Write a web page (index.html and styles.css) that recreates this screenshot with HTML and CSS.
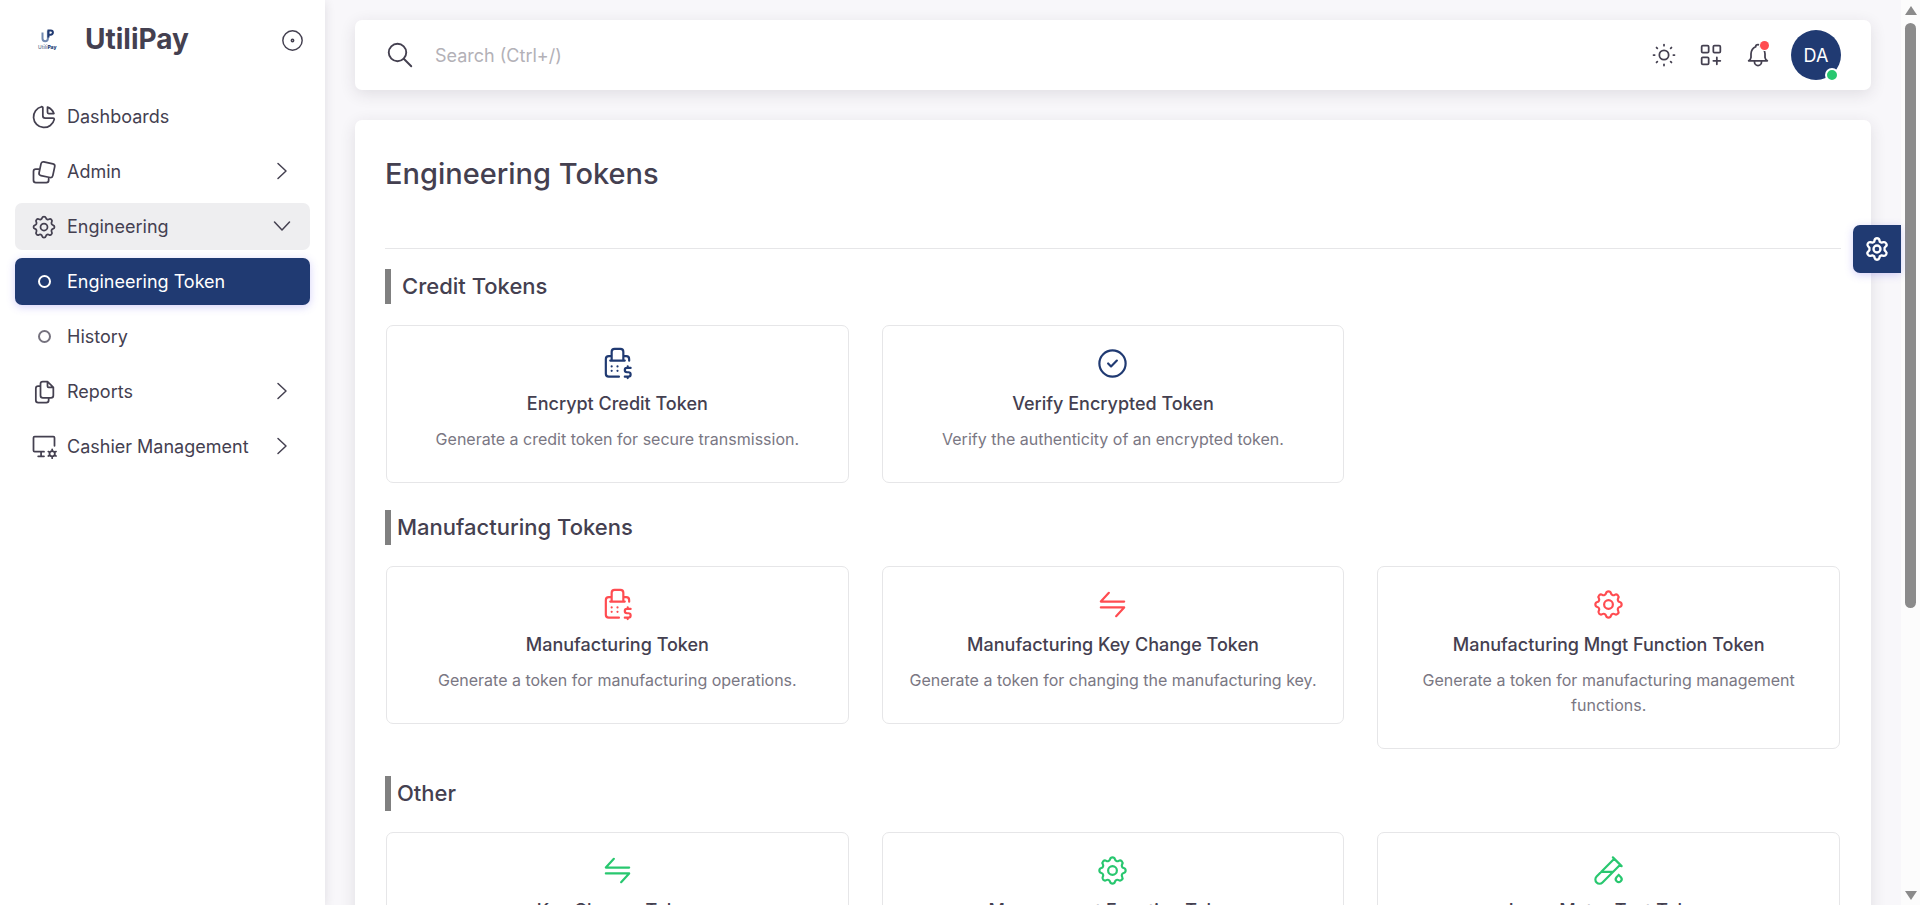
FILE: index.html
```html
<!DOCTYPE html>
<html lang="en">
<head>
<meta charset="utf-8">
<meta name="viewport" content="width=device-width, initial-scale=1">
<title>Engineering Tokens - UtiliPay</title>
<link rel="stylesheet" href="styles.css">
</head>
<body>
<svg class="sprite" aria-hidden="true">
  <symbol id="i-pie" viewBox="0 0 24 24"><path d="M10 3.2a9 9 0 1 0 10.8 10.8a1 1 0 0 0 -1 -1h-6.8a2 2 0 0 1 -2 -2v-7a.9 .9 0 0 0 -1 -.8M15 3.5a9 9 0 0 1 5.5 5.5h-4.5a1 1 0 0 1 -1 -1v-4.5"/></symbol>
  <symbol id="i-layers" viewBox="0 0 24 24"><rect x="8.5" y="4" width="12" height="12" rx="2" transform="rotate(12 14.5 10)"/><path d="M7.4 9.5H5a2 2 0 0 0-2 2V19a2 2 0 0 0 2 2h9a2 2 0 0 0 2-2v-1.4"/></symbol>
  <symbol id="i-gear" viewBox="0 0 24 24"><path d="M10.325 4.317c.426 -1.756 2.924 -1.756 3.35 0a1.724 1.724 0 0 0 2.573 1.066c1.543 -.94 3.31 .826 2.37 2.37a1.724 1.724 0 0 0 1.065 2.572c1.756 .426 1.756 2.924 0 3.35a1.724 1.724 0 0 0 -1.066 2.573c.94 1.543 -.826 3.31 -2.37 2.37a1.724 1.724 0 0 0 -2.572 1.065c-.426 1.756 -2.924 1.756 -3.35 0a1.724 1.724 0 0 0 -2.573 -1.066c-1.543 .94 -3.31 -.826 -2.37 -2.37a1.724 1.724 0 0 0 -1.065 -2.572c-1.756 -.426 -1.756 -2.924 0 -3.35a1.724 1.724 0 0 0 1.066 -2.573c-.94 -1.543 .826 -3.31 2.37 -2.37c1 .608 2.296 .07 2.572 -1.065z"/><circle cx="12" cy="12" r="3"/></symbol>
  <symbol id="i-files" viewBox="0 0 24 24"><path d="M15 3v4a1 1 0 0 0 1 1h4M18 17h-7a2 2 0 0 1 -2 -2v-10a2 2 0 0 1 2 -2h4l5 5v7a2 2 0 0 1 -2 2zM16 17v2a2 2 0 0 1 -2 2h-7a2 2 0 0 1 -2 -2v-10a2 2 0 0 1 2 -2h2"/></symbol>
  <symbol id="i-monitor" viewBox="0 0 24 24"><path d="M12 16H4a1 1 0 0 1-1-1V4a1 1 0 0 1 1-1h16a1 1 0 0 1 1 1v7M7 20h5M9.5 16v4M19 15.5a2.3 2.3 0 1 0 0 4.6a2.3 2.3 0 1 0 0-4.6M19 14v1.5M19 20.1v1.5M15.7 15.9l1.3 .75M21 18.95l1.3 .75M22.3 15.9l-1.3 .75M17 18.95l-1.3 .75"/></symbol>
  <symbol id="i-right" viewBox="0 0 24 24"><path d="M8 4.500l8 7.500l-8 7.500"/></symbol>
  <symbol id="i-down" viewBox="0 0 24 24"><path d="M4.500 8l7.500 8l7.500 -8"/></symbol>
  <symbol id="i-dot" viewBox="0 0 24 24"><circle cx="12" cy="12" r="8"/><circle cx="12" cy="12" r="1"/></symbol>
  <symbol id="i-search" viewBox="0 0 24 24"><circle cx="10" cy="10" r="7"/><path d="M21 21l-6 -6"/></symbol>
  <symbol id="i-sun" viewBox="0 0 24 24"><circle cx="12" cy="12" r="4"/><path d="M3 12h1m8 -9v1m8 8h1m-9 8v1m-6.400 -15.400l.7 .7m12.100 -.7l-.7 .7m0 11.400l.7 .7m-12.100 -.7l-.7 .7"/></symbol>
  <symbol id="i-grid" viewBox="0 0 24 24"><rect x="4" y="4" width="6" height="6" rx="1"/><rect x="14" y="4" width="6" height="6" rx="1"/><rect x="4" y="14" width="6" height="6" rx="1"/><path d="M14 17h6M17 14v6"/></symbol>
  <symbol id="i-bell" viewBox="0 0 24 24"><path d="M10 5a2 2 0 1 1 4 0a7 7 0 0 1 4 6v3a4 4 0 0 0 2 3h-16a4 4 0 0 0 2 -3v-3a7 7 0 0 1 4 -6M9 17v1a3 3 0 0 0 6 0v-1"/></symbol>
  <symbol id="i-register" viewBox="0 0 24 24"><path d="M21 15h-2.500a1.500 1.500 0 0 0 0 3h1a1.500 1.500 0 0 1 0 3h-2.500M19 21v1m0 -8v1M13 21h-7a2 2 0 0 1 -2 -2v-10a2 2 0 0 1 2 -2h2m12 3.120v-1.120a2 2 0 0 0 -2 -2h-2M16 10v-6a2 2 0 0 0 -2 -2h-4a2 2 0 0 0 -2 2v6m8 0h-8m8 0h1m-9 0h-1M8 14v.01M8 17v.01M12 13.990v.01M12 17v.01"/></symbol>
  <symbol id="i-check" viewBox="0 0 24 24"><circle cx="12" cy="12" r="9"/><path d="M9 12l2 2l4 -4"/></symbol>
  <symbol id="i-transfer" viewBox="0 0 24 24"><path d="M20 10h-16l5.500 -6M4 14h16l-5.500 6"/></symbol>
  <symbol id="i-tube" viewBox="0 0 24 24"><path d="M20 8.040l-12.122 12.124a2.857 2.857 0 1 1 -4.041 -4.040l12.122 -12.124M7 13h8M19 15l1.500 1.600a2 2 0 1 1 -3 0l1.500 -1.600M15 3l6 6"/></symbol>
  <symbol id="i-cog" viewBox="0 0 24 24"><path d="M10 4.200Q10.300 2.800 12 2.800T14 4.200L14.400 5.700L16 6.600L17.500 6.200Q19 5.800 19.900 7.300T19.600 9.700L18.500 10.900V13.100L19.600 14.300Q20.700 15.300 19.900 16.700T17.500 17.800L16 17.400L14.400 18.300L14 19.800Q13.700 21.200 12 21.200T10 19.800L9.600 18.300L8 17.400L6.500 17.800Q5 18.200 4.100 16.700T4.400 14.300L5.500 13.100V10.900L4.400 9.700Q3.300 8.700 4.100 7.300T6.500 6.200L8 6.600L9.600 5.700Z"/><circle cx="12" cy="12" r="3"/></symbol>
</svg>

<div class="app">
  <aside class="sidebar">
    <div class="brand">
      <svg class="brand-mark" viewBox="0 0 20 24" role="img" aria-label="UtiliPay logo">
        <path class="mark-cup" d="M4.500 4.500v6a2.700 2.700 0 0 0 5.400 0v-8"/>
        <path class="mark-loop" d="M10.500 9.500v-7h2.300a2 2 0 0 1 0 4.200h-2.300"/>
        <text class="mark-text" x="0" y="21"><tspan class="mark-soft">Utili</tspan>Pay</text>
      </svg>
      <span class="brand-name">UtiliPay</span>
      <button class="icon-btn" type="button" aria-label="Toggle menu"><svg class="icon icon-toggle"><use href="#i-dot"/></svg></button>
    </div>
    <nav class="menu">
      <a class="item" href="#"><svg class="icon"><use href="#i-pie"/></svg><span>Dashboards</span></a>
      <a class="item" href="#"><svg class="icon"><use href="#i-layers"/></svg><span>Admin</span><svg class="icon chevron"><use href="#i-right"/></svg></a>
      <a class="item open" href="#"><svg class="icon"><use href="#i-gear"/></svg><span>Engineering</span><svg class="icon chevron"><use href="#i-down"/></svg></a>
      <a class="item active" href="#"><i class="bullet"></i><span>Engineering Token</span></a>
      <a class="item" href="#"><i class="bullet"></i><span>History</span></a>
      <a class="item" href="#"><svg class="icon"><use href="#i-files"/></svg><span>Reports</span><svg class="icon chevron"><use href="#i-right"/></svg></a>
      <a class="item" href="#"><svg class="icon"><use href="#i-monitor"/></svg><span>Cashier Management</span><svg class="icon chevron"><use href="#i-right"/></svg></a>
    </nav>
  </aside>

  <div class="page">
    <header class="navbar">
      <label class="search">
        <svg class="icon icon-search" role="img" aria-label="Search"><use href="#i-search"/></svg>
        <input type="text" placeholder="Search (Ctrl+/)">
      </label>
      <div class="actions">
        <button class="icon-btn" type="button" aria-label="Theme"><svg class="icon"><use href="#i-sun"/></svg></button>
        <button class="icon-btn" type="button" aria-label="Shortcuts"><svg class="icon"><use href="#i-grid"/></svg></button>
        <button class="icon-btn" type="button" aria-label="Notifications"><svg class="icon"><use href="#i-bell"/></svg><i class="badge"></i></button>
        <button class="avatar" type="button">DA<i class="status"></i></button>
      </div>
    </header>

    <main class="panel">
      <h1 class="title">Engineering Tokens</h1>
      <hr class="rule">

      <h2 class="section section-first">Credit Tokens</h2>
      <div class="cards navy">
        <a class="card" href="#"><svg class="icon"><use href="#i-register"/></svg><h3>Encrypt Credit Token</h3><p>Generate a credit token for secure transmission.</p></a>
        <a class="card" href="#"><svg class="icon"><use href="#i-check"/></svg><h3>Verify Encrypted Token</h3><p>Verify the authenticity of an encrypted token.</p></a>
      </div>

      <h2 class="section">Manufacturing Tokens</h2>
      <div class="cards red">
        <a class="card" href="#"><svg class="icon"><use href="#i-register"/></svg><h3>Manufacturing Token</h3><p>Generate a token for manufacturing operations.</p></a>
        <a class="card" href="#"><svg class="icon"><use href="#i-transfer"/></svg><h3>Manufacturing Key Change Token</h3><p>Generate a token for changing the manufacturing key.</p></a>
        <a class="card" href="#"><svg class="icon"><use href="#i-gear"/></svg><h3>Manufacturing Mngt Function Token</h3><p>Generate a token for manufacturing management functions.</p></a>
      </div>

      <h2 class="section">Other</h2>
      <div class="cards green">
        <a class="card" href="#"><svg class="icon"><use href="#i-transfer"/></svg><h3>Key Change Token</h3></a>
        <a class="card" href="#"><svg class="icon"><use href="#i-gear"/></svg><h3>Management Function Token</h3></a>
        <a class="card" href="#"><svg class="icon"><use href="#i-tube"/></svg><h3>Issue Meter Test Token</h3></a>
      </div>
    </main>
  </div>

  <div class="scrollbar" aria-hidden="true">
    <i class="arrow arrow-up"></i>
    <div class="track"><i class="thumb"></i></div>
    <i class="arrow arrow-down"></i>
  </div>
</div>
<button class="customizer" type="button" aria-label="Customize"><svg class="icon"><use href="#i-cog"/></svg></button>
</body>
</html>
```
FILE: styles.css
```css
:root {
  --navy: #203a72;
  --ink: #444050;
  --muted: #7a7783;
  --line: #e6e6e8;
}
* { box-sizing: border-box; }
body {
  margin: 0;
  height: 100vh;
  overflow: hidden;
  background: #f8f7fa;
  color: var(--ink);
  font: 18px/27px Inter, "Liberation Sans", sans-serif;
}
a { color: inherit; text-decoration: none; }
button { padding: 0; border: 0; background: none; color: inherit; font: inherit; cursor: pointer; }
.sprite { position: absolute; width: 0; height: 0; }
.icon {
  flex: none;
  display: block;
  width: 28px;
  height: 28px;
  fill: none;
  stroke: currentColor;
  stroke-width: 1.5;
  stroke-linecap: round;
  stroke-linejoin: round;
}
.app { display: flex; height: 100%; }

/* Sidebar */
.sidebar {
  flex: none;
  width: 325px;
  background: #fff;
  box-shadow: 0 2px 10px rgba(47, 43, 61, .12);
}
.brand { display: flex; align-items: center; height: 80px; padding: 0 18px 0 38px; }
.brand-mark { width: 20px; height: 24px; overflow: visible; }
.mark-cup, .mark-loop { fill: none; stroke-width: 2; stroke: #7189b0; }
.mark-loop { stroke: var(--navy); }
.mark-text { font-size: 5px; font-weight: 800; fill: var(--navy); }
.mark-soft { font-weight: 600; fill: #7b879e; }
.brand-name { flex: 1; margin-left: 27px; padding-bottom: 2px; font-size: 28px; line-height: 36px; font-weight: 700; }
.icon-toggle { width: 29px; height: 29px; stroke-width: 1.2; }
.menu { display: flex; flex-direction: column; gap: 8px; padding: 13px 15px; }
.item { display: flex; align-items: center; height: 47px; padding: 0 16px 0 15px; border-radius: 7px; }
.item span { flex: 1; margin-left: 9px; white-space: nowrap; }
.open { background: #eeeef0; }
.active { background: var(--navy); color: #fff; box-shadow: 0 2px 8px rgba(115, 103, 240, .3); }
.bullet { flex: none; width: 13px; height: 13px; margin: 0 7px 0 8px; border: 2px solid #75727e; border-radius: 50%; }
.active .bullet { border: 2px solid #fff; }
.chevron { width: 24px; height: 24px; margin-bottom: 2px; }

/* Top bar */
.page { flex: 1; min-width: 0; padding: 20px 30px 0; }
.navbar, .panel { background: #fff; border-radius: 7px; box-shadow: 0 4px 16px rgba(47, 43, 61, .12); }
.navbar { display: flex; align-items: center; height: 70px; padding: 0 30px; }
.search { flex: 1; display: flex; align-items: center; gap: 20px; }
.icon-search { width: 30px; height: 30px; }
.search input { flex: 1; padding: 0; border: 0; outline: 0; background: none; color: inherit; font: inherit; }
.search input::placeholder { color: #b3b1b7; opacity: 1; }
.actions { display: flex; align-items: center; gap: 19px; }
.icon-btn { position: relative; }
.badge { position: absolute; top: 0; right: 3px; width: 9px; height: 9px; border-radius: 50%; background: #ff4c51; box-shadow: 0 0 0 1px #fff; }
.avatar { position: relative; width: 50px; height: 50px; border-radius: 50%; background: var(--navy); color: #fff; }
.status { position: absolute; right: 2px; bottom: -2px; width: 14px; height: 14px; border: 2px solid #fff; border-radius: 50%; background: #28c76f; }

/* Content */
.panel { margin-top: 30px; padding: 30px; }
.title { margin: 0; font-size: 29px; line-height: 47px; font-weight: 500; }
.rule { margin: 51px 0 20px; border: 0; border-top: 1px solid var(--line); }
.section {
  margin: 27px 0 21px;
  padding-left: 6px;
  border-left: 6px solid #808080;
  font-size: 22px;
  line-height: 35px;
  font-weight: 500;
}
.section-first { margin-top: 0; padding-left: 11px; }
.cards { display: grid; grid-template-columns: repeat(3, 1fr); gap: 33px; align-items: start; padding: 0 1px; }
.card {
  display: flex;
  flex-direction: column;
  align-items: center;
  padding: 20px 24px 30px;
  border: 1px solid var(--line);
  border-radius: 7px;
  text-align: center;
}
.card .icon { width: 35px; height: 35px; }
.card h3 { margin: 9px 0 10px; font-size: 18px; line-height: 27px; font-weight: 500; }
.card p { margin: 0; color: var(--muted); font-size: 16px; line-height: 25px; }
.navy .icon { color: var(--navy); }
.red .icon { color: #ff4c51; }
.green .icon { color: #28c76f; }

/* Floating settings button */
.customizer {
  position: fixed;
  top: 225px;
  right: 19px;
  display: grid;
  place-items: center;
  width: 48px;
  height: 48px;
  border-radius: 7px 0 0 7px;
  background: var(--navy);
  color: #fff;
  box-shadow: 0 2px 8px rgba(115, 103, 240, .3);
}
.customizer .icon { stroke-width: 2; }

/* Scrollbar */
.scrollbar { flex: none; display: flex; flex-direction: column; align-items: center; width: 19px; padding: 6px 0 5px; background: #fcfcfc; }
.arrow { border: 6px solid transparent; }
.arrow-up { border-top: 0; border-bottom: 9px solid #8b8b8b; }
.arrow-down { border-bottom: 0; border-top: 9px solid #8b8b8b; }
.track { flex: 1; padding: 8px 0; }
.thumb { display: block; width: 11px; height: 68%; border-radius: 6px; background: #8b8b8b; }
```
